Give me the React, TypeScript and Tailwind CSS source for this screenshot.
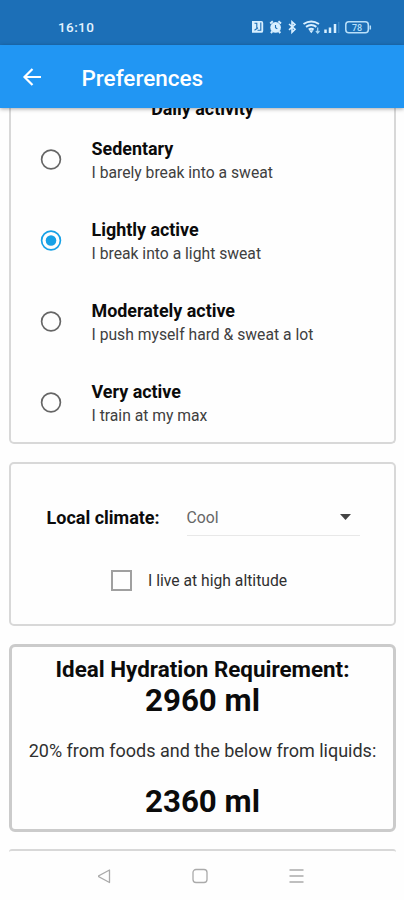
import type { ReactNode } from "react";

const activities = [
  { title: "Sedentary", note: "I barely break into a sweat", selected: false },
  { title: "Lightly active", note: "I break into a light sweat", selected: true },
  { title: "Moderately active", note: "I push myself hard & sweat a lot", selected: false },
  { title: "Very active", note: "I train at my max", selected: false },
];

function StatusIcons() {
  return (
    <svg className="h-[16px] w-[124px]" viewBox="250 20 124 16" fill="none">
      <path d="M252 22h9.300q1.900 0 1.900 1.900v8q0 1.900-1.900 1.900H252z" fill="#d8efff" />
      <path d="M254.500 24.300h2.300v5.200M260.800 23.500v7.800h-3.300M254.500 31.300l3.500-2.500" stroke="#1c6fb7" strokeWidth="1.100" />
      <circle cx="275.600" cy="28.400" r="5.300" fill="#d8efff" />
      <path d="M270.200 24.500l2.600-2.200M281 24.500l-2.600-2.200M272.200 32.500l-1.300 1.500M279 32.500l1.300 1.500" stroke="#d8efff" strokeWidth="2" />
      <path d="M275.500 26v2.700l1.800 1" stroke="#1c6fb7" strokeWidth="1.100" />
      <path d="M289 25l6 5.200-3 3V22.800l3 2.800-6 5.200" stroke="#d8efff" strokeWidth="1.600" />
      <path d="M303.500 25q7.800-5 15.500 0M306 27.800q5.200-3.400 10.400 0M308.700 30.500q2.500-1.600 5 0" stroke="#d8efff" strokeWidth="2" />
      <path d="M309 31.300h4.500l-2.200 3z" fill="#d8efff" />
      <path d="M317.700 28.500v5.500M315.900 32l1.800 2 1.800-2" stroke="#a9d8f6" strokeWidth="1.200" />
      <path d="M325.500 30.500v3.500M330 28.500V34M335 25V34" stroke="#d8efff" strokeWidth="2.500" />
      <path d="M338.800 23v11" stroke="#4c94d0" strokeWidth="1" />
      <rect x="345.800" y="22.800" width="22.500" height="10.900" rx="3" stroke="#b9e0fa" strokeWidth="1.500" />
      <path d="M370.300 26.500v4" stroke="#b9e0fa" strokeWidth="1.500" />
      <text x="357" y="31.600" textAnchor="middle" fontFamily="Roboto, sans-serif" fontSize="9" fontWeight="500" fill="#b9e0fa">78</text>
    </svg>
  );
}

function Radio({ selected }: { selected: boolean }) {
  return (
    <svg className="h-[22px] w-[22px] shrink-0" viewBox="0 0 22 22" fill="none">
      <circle cx="11" cy="10.500" r="9.400" stroke={selected ? "#16a1e6" : "#666666"} strokeWidth="1.700" />
      {selected && <circle cx="11" cy="10.500" r="5.300" fill="#16a1e6" />}
    </svg>
  );
}

function Card({ className, children }: { className: string; children?: ReactNode }) {
  return <section className={`mr-[8px] ml-[9px] shrink-0 ${className}`}>{children}</section>;
}

export default function App() {
  return (
    <div className="flex h-[900px] w-[404px] flex-col overflow-hidden bg-[#fefefe] font-[Roboto,sans-serif] whitespace-nowrap text-[#0b0b0b]">
      <div className="flex h-[45px] shrink-0 items-start justify-between bg-[#1c6fb7] pt-[19px] pr-[30px] pl-[58px]">
        <span className="text-[13.5px] leading-[17px] font-medium tracking-[0.4px] text-[#e2f3ff]">16:10</span>
        <StatusIcons />
      </div>
      <header className="relative z-10 flex h-[63px] shrink-0 items-center bg-[#2196f3] pl-[22px] text-white shadow-[0_1px_4px_rgba(0,0,0,0.35)]">
        <svg className="h-5 w-5" viewBox="0 0 20 20" fill="none" stroke="currentColor" strokeWidth="2.200">
          <path d="M19 10H3M10.500 2L2.500 10l8 8" />
        </svg>
        <h1 className="mt-[2px] ml-[39.5px] text-[22.5px] leading-[28px] font-medium">Preferences</h1>
      </header>

      <main className="flex h-[744px] shrink-0 flex-col">
        <Card className="h-[336px] rounded-b-[5px] border-x-2 border-b-2 border-[#d8d8d8]">
          <div className="flex h-[11px] items-end justify-center">
            <h2 className="text-[17.9px] leading-[20px] font-bold">Daily activity</h2>
          </div>
          {activities.map((item) => (
            <div key={item.title} className="flex h-[81px] items-center pl-[29px]">
              <Radio selected={item.selected} />
              <div className="mt-[3px] ml-[29.5px]">
                <div className="text-[17.9px] leading-[22px] font-bold">{item.title}</div>
                <div className="mt-[1px] text-[15.7px] leading-[24px] text-[#404040]">{item.note}</div>
              </div>
            </div>
          ))}
        </Card>

        <Card className="mt-[18px] h-[164px] rounded-[5px] border-2 border-[#d8d8d8]">
          <div className="mt-[34px] flex h-[38px] items-center pl-[35.5px]">
            <span className="w-[114px] text-[18px] font-bold">Local climate:</span>
            <div className="ml-[26px] flex h-[38px] w-[173px] items-center justify-between border-b border-[#e8e8e8] pr-[9px]">
              <span className="mt-[2px] text-[15.8px] text-[#666666]">Cool</span>
              <svg className="mt-[1px] h-[6px] w-[11px]" viewBox="0 0 11 6" fill="#444444">
                <path d="M0 0h11L5.500 6z" />
              </svg>
            </div>
          </div>
          <div className="mt-[34px] flex h-[21px] items-center pl-[100px]">
            <div className="h-[21px] w-[21px] border-2 border-[#a0a0a0]" />
            <span className="ml-[16px] text-[15.7px] text-[#303030]">I live at high altitude</span>
          </div>
        </Card>

        <Card className="mt-[18px] flex h-[188px] flex-col items-center rounded-[6px] border-[3px] border-[#cbcbcb]">
          <h2 className="mt-[8px] text-[22.4px] leading-[28px] font-bold">Ideal Hydration Requirement:</h2>
          <div className="mt-[2px] text-[31.3px] leading-[32px] font-bold">2960 ml</div>
          <p className="mt-[22px] text-[18px] leading-[24px] text-[#303030]">20% from foods and the below from liquids:</p>
          <div className="mt-[23px] text-[31.3px] leading-[32px] font-bold">2360 ml</div>
        </Card>

        <Card className="mt-[17px] h-[3px] rounded-t-[4px] border-t-2 border-[#d8d8d8]" />
      </main>

      <nav className="flex h-[48px] shrink-0 items-center justify-center">
        <svg className="h-[18px] w-[208px]" viewBox="0 0 208 18" fill="none" stroke="#aaaaaa" strokeWidth="1.300">
          <path d="M11.500 3v12.500L0 9.200z" strokeLinejoin="round" />
          <rect x="95" y="2.500" width="14" height="13" rx="3" />
          <path d="M191.500 3h14M191.500 9h14M191.500 15h14" />
        </svg>
      </nav>
    </div>
  );
}
